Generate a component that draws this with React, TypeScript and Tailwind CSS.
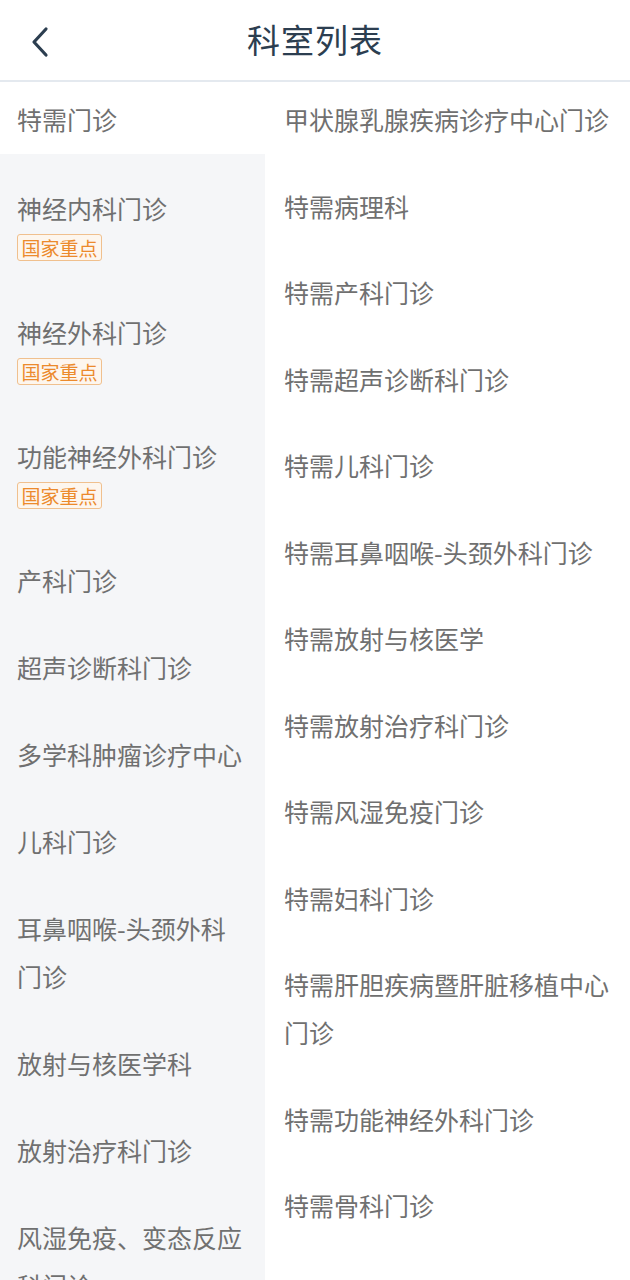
import React from "react";

type LeftItem = { name: string; badge?: boolean };

const leftItems: LeftItem[] = [
  { name: "神经内科门诊", badge: true },
  { name: "神经外科门诊", badge: true },
  { name: "功能神经外科门诊", badge: true },
  { name: "产科门诊" },
  { name: "超声诊断科门诊" },
  { name: "多学科肿瘤诊疗中心" },
  { name: "儿科门诊" },
  { name: "耳鼻咽喉-头颈外科门诊" },
  { name: "放射与核医学科" },
  { name: "放射治疗科门诊" },
  { name: "风湿免疫、变态反应科门诊" },
  { name: "骨科门诊" },
];

const rightItems = [
  "甲状腺乳腺疾病诊疗中心门诊",
  "特需病理科",
  "特需产科门诊",
  "特需超声诊断科门诊",
  "特需儿科门诊",
  "特需耳鼻咽喉-头颈外科门诊",
  "特需放射与核医学",
  "特需放射治疗科门诊",
  "特需风湿免疫门诊",
  "特需妇科门诊",
  "特需肝胆疾病暨肝脏移植中心门诊",
  "特需功能神经外科门诊",
  "特需骨科门诊",
  "特需呼吸内科门诊",
];

export default function App() {
  return (
    <div
      className="w-[630px] h-[1280px] overflow-hidden bg-white flex flex-col"
      style={{ fontFamily: '"Noto Sans CJK SC", "Noto Sans", sans-serif' }}
    >
      <header className="relative h-[82px] shrink-0 flex items-center justify-center border-b-2 border-[#e4e9ef] bg-white">
        <div className="absolute left-[30px] top-[26px] w-[20px] h-[32px] flex items-center">
          <svg width="20" height="32" viewBox="0 0 20 32" fill="none">
            <path
              d="M16 3 L4 16 L16 29"
              stroke="#2c3e50"
              strokeWidth="3.2"
              strokeLinecap="round"
              strokeLinejoin="round"
            />
          </svg>
        </div>
        <h1 className="text-[33px] leading-none text-[#2c3e50] font-normal tracking-[1px] -mt-[1px]">
          科室列表
        </h1>
      </header>

      <div className="flex flex-1 min-h-0 overflow-hidden">
        <div className="w-[265px] shrink-0 bg-[#f5f6f8] flex flex-col">
          <div className="h-[72px] shrink-0 bg-white px-[17px] pt-[13px] text-[25px] leading-[48px] text-[#707070]">
            特需门诊
          </div>
          {leftItems.map((it) => (
            <div key={it.name} className="shrink-0 pl-[17px] pr-[17px] pt-[30px] pb-[9px]">
              <div className="text-[25px] leading-[48px] text-[#707070] break-all">{it.name}</div>
              {it.badge && (
                <div className="mt-[2px] mb-[8px] flex">
                  <span className="h-[27px] px-[3.5px] flex items-center border border-[#f0c08e] bg-[#fdf6ee] rounded-[3px] text-[19px] leading-none text-[#ec8a2c]">
                    国家重点
                  </span>
                </div>
              )}
            </div>
          ))}
        </div>

        <div className="flex-1 bg-white pl-[19px] pr-[10px] pt-[13px] flex flex-col">
          {rightItems.map((name) => (
            <div key={name} className="shrink-0 pb-[38.5px] text-[25px] leading-[48px] text-[#707070] break-all">
              {name}
            </div>
          ))}
        </div>
      </div>
    </div>
  );
}
